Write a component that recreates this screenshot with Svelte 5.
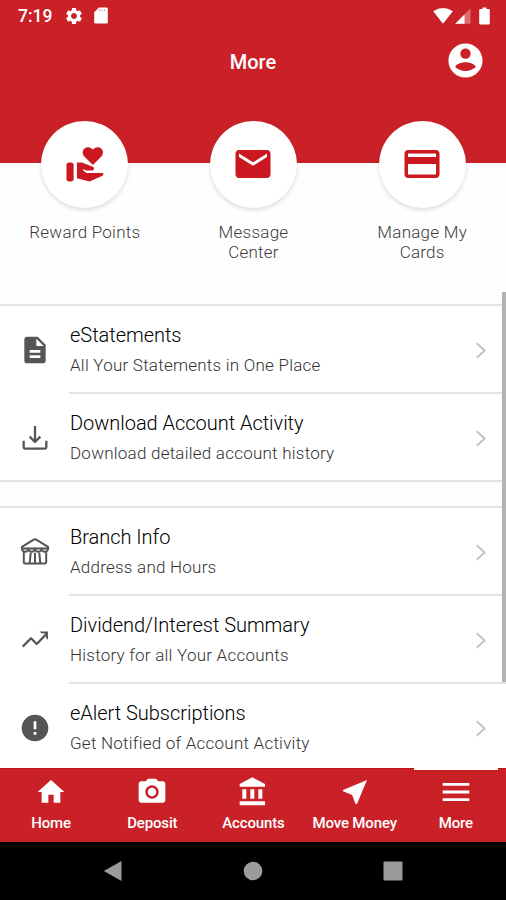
<script>
  const shortcuts = [
    { icon: "reward", lines: ["Reward Points"] },
    { icon: "mail", lines: ["Message", "Center"] },
    { icon: "card", lines: ["Manage My", "Cards"] },
  ];

  const groups = [
    [
      {
        icon: "document",
        title: "eStatements",
        text: "All Your Statements in One Place",
      },
      {
        icon: "download",
        title: "Download Account Activity",
        text: "Download detailed account history",
      },
    ],
    [
      { icon: "branch", title: "Branch Info", text: "Address and Hours" },
      {
        icon: "trend",
        title: "Dividend/Interest Summary",
        text: "History for all Your Accounts",
      },
      {
        icon: "alert",
        title: "eAlert Subscriptions",
        text: "Get Notified of Account Activity",
      },
    ],
  ];

  const tabs = [
    { icon: "home", label: "Home" },
    { icon: "camera", label: "Deposit" },
    { icon: "bank", label: "Accounts" },
    { icon: "send", label: "Move Money" },
    { icon: "menu", label: "More" },
  ];

  let activeTab = $state("More");
</script>

{#snippet icon(name)}
  <svg class="icon {name}" viewBox="0 0 24 24" aria-hidden="true">
    {#if name === "reward"}
      <path d="M16.300 12 L11.500 7.200 C9.900 5.300 11 2.300 13.600 2.300 C14.800 2.300 15.700 2.800 16.300 3.700 C16.900 2.800 17.800 2.300 19 2.300 C21.600 2.300 22.700 5.300 21.100 7.200 Z" />
      <rect x="1.900" y="10.600" width="3.900" height="10.400" rx="1.500" />
      <path d="M7.600 10.600 H10.300 L16.300 13 C17.200 13.400 17.100 14.700 16.200 15 H12.800 L11.200 14.300 L10.900 15 L12.800 16.300 H21.300 C22.300 16.300 22.200 17.500 21.500 17.800 L14.500 21 L7.600 19.200 Z" />
    {:else if name === "mail"}
      <path d="M20 4H4c-1.100 0-2 .9-2 2v12c0 1.100.9 2 2 2h16c1.100 0 2-.9 2-2V6c0-1.100-.9-2-2-2zm0 4l-8 5-8-5V6l8 5 8-5v2z" />
    {:else if name === "card"}
      <path d="M20 4H4c-1.110 0-1.990.89-1.990 2L2 18c0 1.110.89 2 2 2h16c1.110 0 2-.89 2-2V6c0-1.110-.89-2-2-2zm0 14H4v-6h16v6zm0-10H4V6h16v2z" />
    {:else if name === "document"}
      <path d="M14 2H6c-1.100 0-2 .9-2 2v16c0 1.100.9 2 2 2h12c1.100 0 2-.9 2-2V8l-6-6zm2 16H8v-2h8v2zm0-4H8v-2h8v2zm-3-5V3.500L18.500 9H13z" />
    {:else if name === "download"}
      <g class="line">
        <path d="M3.500 14V19Q3.500 20 4.500 20H19.500Q20.500 20 20.500 19V14" />
        <path d="M12 3V14.500M8 11L12 15L16 11" />
      </g>
    {:else if name === "branch"}
      <g class="line">
        <path d="M2.200 8.200L11 2.700Q12 2.100 13 2.700L21.800 8.200V9.300H2.200Z" />
        <path d="M2.200 9.300a2.450 2.600 0 0 0 4.900 0a2.450 2.600 0 0 0 4.900 0a2.450 2.600 0 0 0 4.900 0a2.450 2.600 0 0 0 4.900 0" />
        <path d="M3.600 12V19.700Q3.600 20.700 4.600 20.700H19.400Q20.400 20.700 20.400 19.700V12M8.800 12.500L8 20.500M15.200 12.500L16 20.500" />
        <path d="M12 12.500V20.500" />
      </g>
    {:else if name === "trend"}
      <g class="line">
        <path d="M2.800 17L9 10.700L13.300 15L20 8" />
      </g>
      <path d="M15.400 5.600H21.700V11.900L20.300 10.500V8.500L18.800 7H16.800Z" />
    {:else if name === "alert"}
      <path d="M12 2C6.480 2 2 6.480 2 12s4.480 10 10 10 10-4.480 10-10S17.520 2 12 2zm1 15h-2v-2h2v2zm0-4h-2V7h2v6z" />
    {:else if name === "home"}
      <path d="M10 20v-6h4v6h5v-8h3L12 3 2 12h3v8z" />
    {:else if name === "camera"}
      <circle cx="12" cy="12" r="3.200" />
      <path d="M9 2L7.170 4H4c-1.100 0-2 .9-2 2v12c0 1.100.9 2 2 2h16c1.100 0 2-.9 2-2V6c0-1.100-.9-2-2-2h-3.170L15 2H9zm3 15c-2.760 0-5-2.240-5-5s2.240-5 5-5 5 2.240 5 5-2.240 5-5 5z" />
    {:else if name === "bank"}
      <path d="M4 10v7h3v-7H4zm6 0v7h3v-7h-3zM2 22h19v-3H2v3zm14-12v7h3v-7h-3zm-4.500-9L2 6v2h19V6l-9.500-5z" />
    {:else if name === "send"}
      <path d="M21 3L3 10.530v.98l6.840 2.650L12.480 21h.98L21 3z" />
    {:else if name === "menu"}
      <path d="M2 5.300h20v2.100H2zM2 10.950h20v2.100H2zM2 16.600h20v2.100H2z" />
    {:else if name === "account"}
      <path d="M12 2C6.480 2 2 6.480 2 12s4.480 10 10 10 10-4.480 10-10S17.520 2 12 2zm0 3c1.660 0 3 1.340 3 3s-1.340 3-3 3-3-1.340-3-3 1.340-3 3-3zm0 13.200c-2.500 0-4.710-1.280-6-2.220.03-1.990 4-2.980 6-2.980s5.970.99 6 2.980c-1.290.94-3.500 2.220-6 2.220z" />
    {:else if name === "gear"}
      <path d="M19.140 12.940c.04-.3.060-.61.060-.94 0-.32-.02-.64-.07-.94l2.030-1.580c.18-.14.23-.41.12-.61l-1.920-3.320c-.12-.22-.37-.29-.59-.22l-2.390.96c-.5-.38-1.030-.7-1.620-.94l-.36-2.540c-.04-.24-.24-.41-.48-.41h-3.840c-.24 0-.43.17-.47.41l-.36 2.540c-.59.24-1.130.57-1.620.94l-2.390-.96c-.22-.08-.47 0-.59.22L2.740 8.870c-.12.210-.08.47.12.61l2.030 1.580c-.05.3-.09.63-.09.94s.02.64.07.94l-2.030 1.580c-.18.14-.23.41-.12.61l1.920 3.320c.12.22.37.29.59.22l2.390-.96c.5.38 1.030.7 1.620.94l.36 2.540c.05.24.24.41.48.41h3.840c.24 0 .44-.17.47-.41l.36-2.540c.59-.24 1.130-.56 1.620-.94l2.390.96c.22.08.47 0 .59-.22l1.920-3.320c.12-.22.07-.47-.12-.61l-2.010-1.580zM12 15.600c-1.980 0-3.600-1.620-3.600-3.600s1.620-3.600 3.600-3.600 3.600 1.620 3.600 3.600-1.620 3.600-3.600 3.600z" />
    {/if}
  </svg>
{/snippet}

<div class="screen">
  <header>
    <div class="status">
      <span class="time">7:19</span>
      {@render icon("gear")}
      <svg class="sd" viewBox="0 0 14 17" aria-hidden="true">
        <path d="M5 0.500H12.500Q13.800 0.500 13.800 1.800V15.200Q13.800 16.500 12.500 16.500H1.500Q0.200 16.500 0.200 15.200V5.300Z" />
        <path class="slots" d="M5.500 2.500V4M8 2.500V4M10.500 2.500V4" />
      </svg>
      <span class="gap"></span>
      <svg class="wifi" viewBox="0 0 20 16" aria-hidden="true">
        <path d="M0.200 3.200Q10 -3.200 19.800 3.200L10 15.700Z" />
      </svg>
      <svg class="signal" viewBox="0 0 16 16" aria-hidden="true">
        <path class="faint" d="M15.500 0.500V15.700H0.300Z" />
        <path d="M9.500 6.500V15.700H0.300Z" />
      </svg>
      <svg class="battery" viewBox="0 0 11 18" aria-hidden="true">
        <path d="M3.500 0.500H7.500V2H9.600Q10.800 2 10.800 3.200V16.300Q10.800 17.500 9.600 17.500H1.400Q0.200 17.500 0.200 16.300V3.200Q0.200 2 1.400 2H3.500Z" />
      </svg>
    </div>
    <div class="titlebar">
      <h1>More</h1>
      <button class="profile" aria-label="Profile">{@render icon("account")}</button>
    </div>
  </header>

  <section class="shortcuts">
    {#each shortcuts as shortcut}
      <button class="shortcut">
        <span class="circle">{@render icon(shortcut.icon)}</span>
        <span class="caption">
          {#each shortcut.lines as line}
            <span>{line}</span>
          {/each}
        </span>
      </button>
    {/each}
  </section>

  <main>
    {#each groups as items}
      <div class="group">
        {#each items as item}
          <div class="row">
            <div class="lead">{@render icon(item.icon)}</div>
            <div class="body">
              <div class="copy">
                <h2>{item.title}</h2>
                <p>{item.text}</p>
              </div>
              <svg class="chevron" viewBox="0 0 12 18" aria-hidden="true">
                <path d="M1.500 1.300L9.800 9L1.500 16.700" />
              </svg>
            </div>
          </div>
        {/each}
      </div>
    {/each}
    <div class="scrollbar"></div>
  </main>

  <nav class="tabs">
    {#each tabs as tab}
      <button
        class="tab"
        class:active={activeTab === tab.label}
        onclick={() => (activeTab = tab.label)}
      >
        {@render icon(tab.icon)}
        <span>{tab.label}</span>
      </button>
    {/each}
  </nav>

  <div class="system">
    <svg viewBox="0 0 20 22" aria-hidden="true"><path d="M18.500 1V21L0.800 11Z" /></svg>
    <svg viewBox="0 0 20 22" aria-hidden="true"><circle cx="10" cy="11" r="9.300" /></svg>
    <svg viewBox="0 0 20 22" aria-hidden="true"><rect x="0.500" y="1.500" width="19" height="19" rx="1" /></svg>
  </div>
</div>

<style>
  :global(body) {
    margin: 0;
    background: #fff;
  }

  .screen {
    display: flex;
    flex-direction: column;
    width: 506px;
    height: 900px;
    overflow: hidden;
    background: #fefefe;
    font-family: Roboto, "Liberation Sans", sans-serif;
  }

  button {
    padding: 0;
    border: 0;
    background: none;
    color: inherit;
    font: inherit;
  }

  svg {
    display: block;
    flex: none;
    fill: currentColor;
  }

  header {
    flex: none;
    height: 163px;
    background: #ca2128;
    color: #fff;
  }

  .status {
    display: flex;
    align-items: center;
    height: 31px;
    padding: 0 16px 0 18px;
  }

  .time {
    width: 46px;
    font-size: 17.5px;
    font-weight: 500;
  }

  .gear {
    width: 20px;
    height: 20px;
  }

  .sd {
    width: 14px;
    height: 17px;
    margin-left: 10px;
  }

  .slots {
    stroke: #ca2128;
    stroke-opacity: 0.6;
    stroke-width: 1;
  }

  .gap {
    flex: 1;
  }

  .wifi {
    width: 20px;
    height: 16px;
  }

  .signal {
    width: 16px;
    height: 16px;
    margin: 0 8px 0 2px;
  }

  .faint {
    opacity: 0.35;
  }

  .battery {
    width: 11px;
    height: 18px;
  }

  .titlebar {
    display: grid;
    grid-template-columns: 1fr auto 1fr;
    align-items: center;
    height: 59px;
    padding: 0 20px;
  }

  h1 {
    grid-column: 2;
    margin: 2px 0 0;
    font-size: 20px;
    font-weight: 500;
  }

  .profile {
    justify-self: end;
  }

  .account {
    width: 41px;
    height: 41px;
  }

  .shortcuts {
    display: grid;
    grid-template-columns: repeat(3, 1fr);
    flex: none;
    height: 172px;
    margin-top: -43px;
  }

  .shortcut {
    display: flex;
    flex-direction: column;
    align-items: center;
    padding: 1px 0 0 1px;
  }

  .circle {
    display: flex;
    align-items: center;
    justify-content: center;
    width: 87px;
    height: 87px;
    border-radius: 50%;
    background: #fff;
    box-shadow: 0 2px 4px rgba(0, 0, 0, 0.14);
    color: #ca1720;
  }

  .circle .icon {
    width: 42px;
    height: 42px;
    margin-bottom: 1px;
  }

  .circle .reward {
    width: 44px;
    height: 44px;
    margin-bottom: 0;
  }

  .caption {
    display: flex;
    flex-direction: column;
    margin-top: 14px;
    color: #3c3c3c;
    font-size: 17px;
    font-weight: 300;
    line-height: 20px;
    letter-spacing: 0.25px;
  }

  main {
    position: relative;
    flex: 1;
    min-height: 0;
    padding-top: 12px;
  }

  .group {
    border-top: 2px solid #e3e3e3;
    border-bottom: 2px solid #e3e3e3;
    background: #fff;
  }

  .group + .group {
    margin-top: 24px;
  }

  .row {
    display: flex;
    height: 88px;
  }

  .row:last-child {
    height: 86px;
  }

  .lead {
    display: flex;
    justify-content: center;
    width: 69px;
    padding-top: 28px;
    box-sizing: border-box;
    color: #555;
  }

  .lead .icon {
    width: 32px;
    height: 32px;
  }

  .line {
    fill: none;
    stroke: currentColor;
    stroke-width: 1.7;
    stroke-linejoin: round;
  }

  .branch .line {
    stroke-width: 1.5;
  }

  .body {
    display: flex;
    justify-content: space-between;
    flex: 1;
    box-sizing: border-box;
    padding-right: 19px;
    border-bottom: 2px solid #e3e3e3;
  }

  .row:last-child .body {
    border-bottom: 0;
  }

  .copy {
    padding: 16px 0 0 1px;
  }

  h2,
  p {
    margin: 0;
    font-weight: 300;
    white-space: nowrap;
  }

  h2 {
    color: #000;
    font-size: 20px;
    line-height: 26px;
    letter-spacing: -0.03px;
  }

  p {
    margin-top: 6px;
    color: #333;
    font-size: 17px;
    line-height: 22px;
    letter-spacing: 0.23px;
  }

  .chevron {
    width: 12px;
    height: 17px;
    margin-top: 36px;
  }

  .chevron path {
    fill: none;
    stroke: #c2c2c2;
    stroke-width: 2;
  }

  .scrollbar {
    position: absolute;
    top: 0;
    right: 0;
    width: 4px;
    height: 390px;
    background: #b3b3b3;
  }

  .tabs {
    position: relative;
    display: grid;
    grid-template-columns: repeat(5, 1fr);
    flex: none;
    height: 74px;
    background: #ca2128;
    box-shadow: inset 0 1px #bf111a;
    color: #fff;
  }

  .tab {
    position: relative;
    display: flex;
    flex-direction: column;
    align-items: center;
    padding: 8px 0 0 1px;
    font-size: 15px;
    font-weight: 500;
    line-height: 18px;
    letter-spacing: -0.15px;
    white-space: nowrap;
  }

  .tab .icon {
    width: 32px;
    height: 32px;
    margin-bottom: 6px;
  }

  .active::before {
    content: "";
    position: absolute;
    top: 0;
    width: 84px;
    height: 2px;
    background: #fff;
  }

  .system {
    display: flex;
    align-items: center;
    justify-content: center;
    gap: 120px;
    flex: none;
    height: 58px;
    background: #000;
    color: #9b9b9b;
  }

  .system svg {
    width: 20px;
    height: 22px;
  }
</style>
